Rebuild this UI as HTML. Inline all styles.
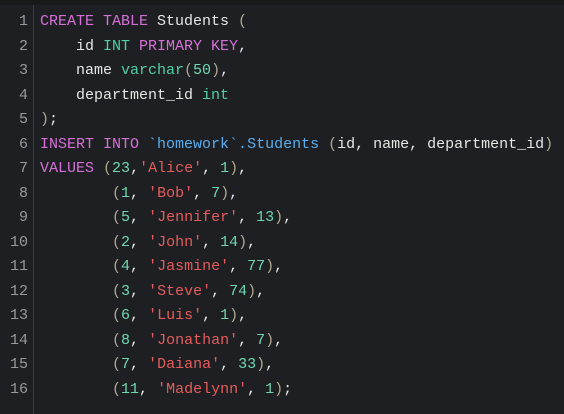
<!DOCTYPE html>
<html><head><style>
html,body{margin:0;padding:0;}
body{width:564px;height:414px;background:#1e1f22;overflow:hidden;position:relative;font-family:"Liberation Mono","DejaVu Sans Mono",monospace;font-size:15px;}
.top{position:absolute;left:0;top:0;width:564px;height:5px;background:#18191b;}
.gut{position:absolute;left:33px;top:5px;width:1px;height:409px;background:#3a3b3e;}
.ln{position:absolute;left:0;top:10px;width:28px;text-align:right;color:#9a9a9a;line-height:24.5px;}
.code{position:absolute;left:40px;top:10px;color:#e6e6e6;line-height:24.5px;white-space:pre;}
.k{color:#d670d8}.t{color:#4ecfa5}.s{color:#e55c5c}.b{color:#5aaef0}.p{color:#b0a890}.n{color:#6fd8b0}
</style></head><body>
<div class="top"></div><div class="gut"></div>
<div class="ln">1<br>2<br>3<br>4<br>5<br>6<br>7<br>8<br>9<br>10<br>11<br>12<br>13<br>14<br>15<br>16</div>
<div class="code"><span class="k">CREATE TABLE</span> Students <span class="p">(</span>
    id <span class="t">INT</span> <span class="k">PRIMARY KEY</span>,
    name <span class="t">varchar</span><span class="p">(</span><span class="n">50</span><span class="p">)</span>,
    department_id <span class="t">int</span>
<span class="p">)</span>;
<span class="k">INSERT INTO</span> <span class="b">`homework`.Students</span> <span class="p">(</span>id, name, department_id<span class="p">)</span>
<span class="k">VALUES</span> <span class="p">(</span><span class="n">23</span>,<span class="s">'Alice'</span>, <span class="n">1</span><span class="p">)</span>,
        <span class="p">(</span><span class="n">1</span>, <span class="s">'Bob'</span>, <span class="n">7</span><span class="p">)</span>,
        <span class="p">(</span><span class="n">5</span>, <span class="s">'Jennifer'</span>, <span class="n">13</span><span class="p">)</span>,
        <span class="p">(</span><span class="n">2</span>, <span class="s">'John'</span>, <span class="n">14</span><span class="p">)</span>,
        <span class="p">(</span><span class="n">4</span>, <span class="s">'Jasmine'</span>, <span class="n">77</span><span class="p">)</span>,
        <span class="p">(</span><span class="n">3</span>, <span class="s">'Steve'</span>, <span class="n">74</span><span class="p">)</span>,
        <span class="p">(</span><span class="n">6</span>, <span class="s">'Luis'</span>, <span class="n">1</span><span class="p">)</span>,
        <span class="p">(</span><span class="n">8</span>, <span class="s">'Jonathan'</span>, <span class="n">7</span><span class="p">)</span>,
        <span class="p">(</span><span class="n">7</span>, <span class="s">'Daiana'</span>, <span class="n">33</span><span class="p">)</span>,
        <span class="p">(</span><span class="n">11</span>, <span class="s">'Madelynn'</span>, <span class="n">1</span><span class="p">)</span>;</div>
</body></html>
